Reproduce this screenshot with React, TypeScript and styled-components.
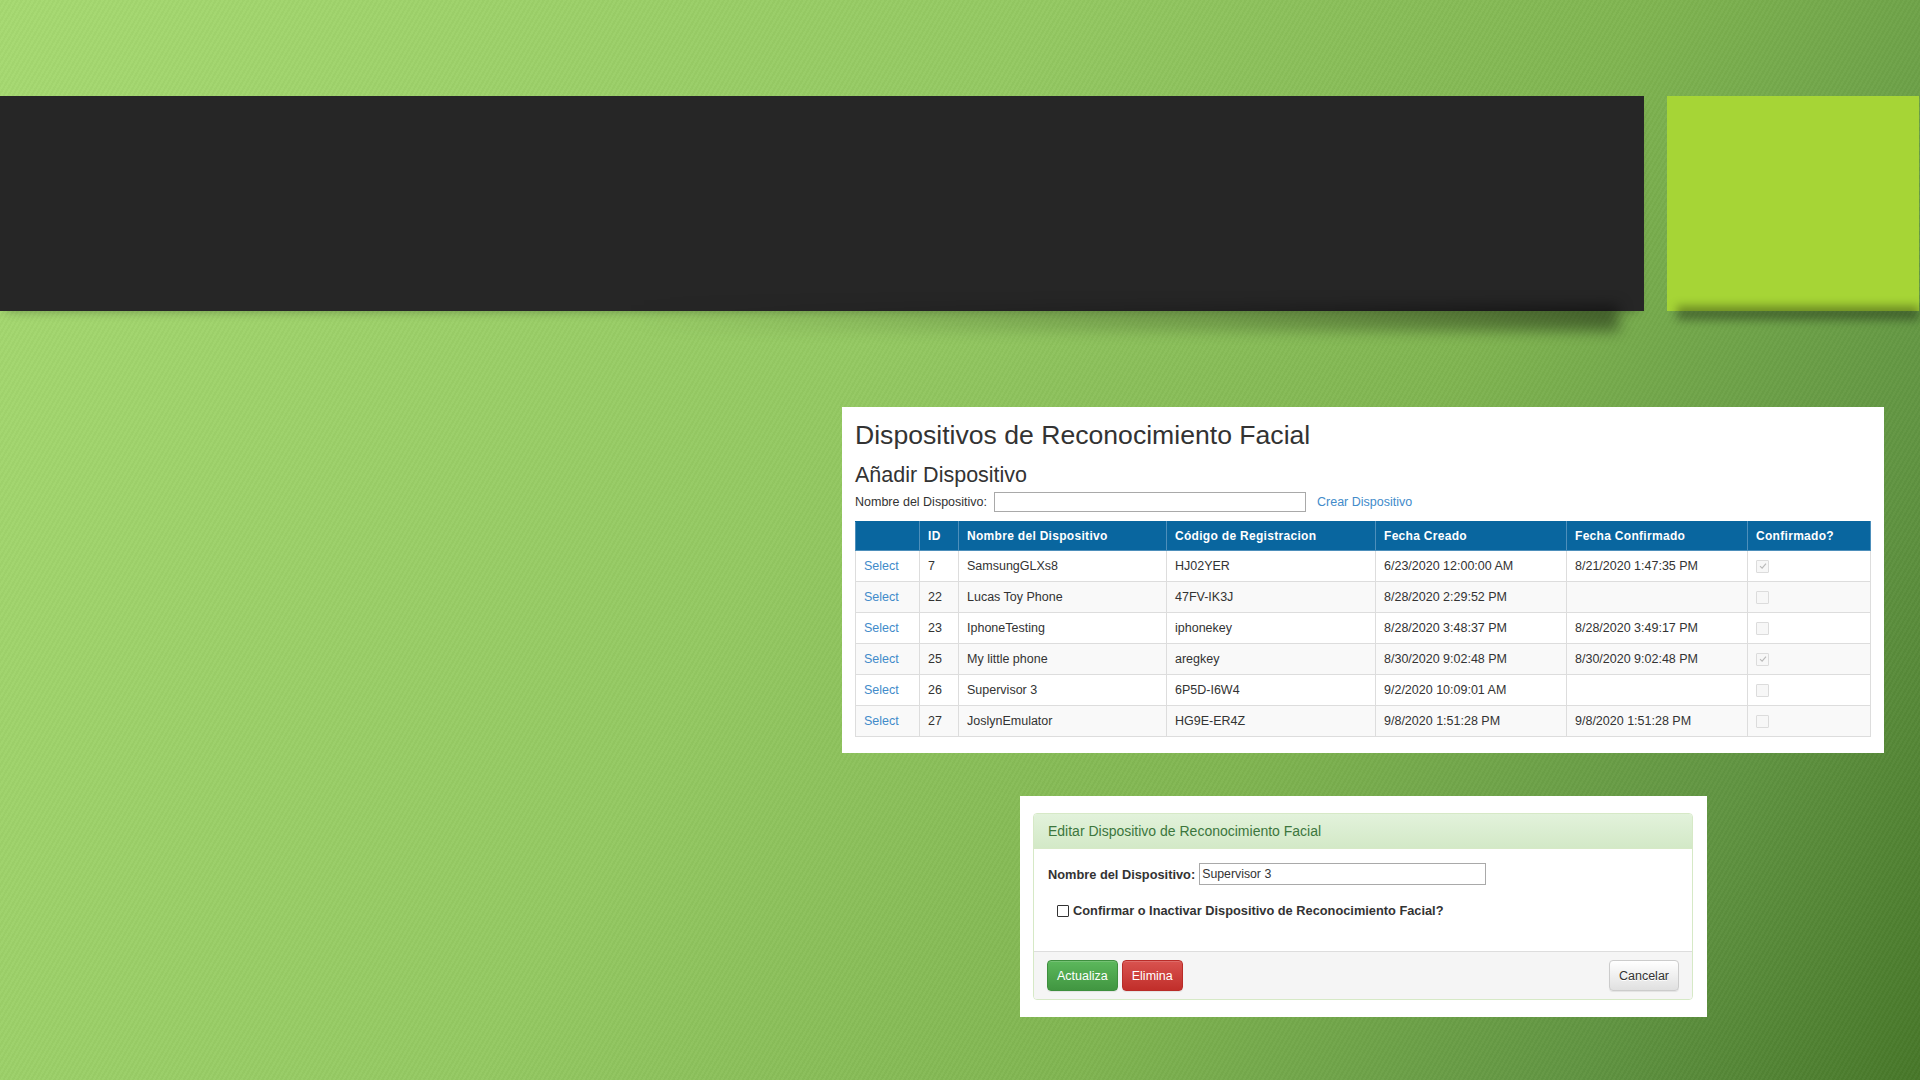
import styled, { createGlobalStyle } from "styled-components";

const GlobalStyle = createGlobalStyle`
  html, body {
    margin: 0;
    padding: 0;
  }
  body {
    width: 1920px;
    height: 1080px;
    overflow: hidden;
    font-family: "Liberation Sans", Arial, sans-serif;
  }
`;

type Device = {
  id: number;
  name: string;
  code: string;
  created: string;
  confirmedAt: string;
  confirmed: boolean;
};

const devices: Device[] = [
  { id: 7, name: "SamsungGLXs8", code: "HJ02YER", created: "6/23/2020 12:00:00 AM", confirmedAt: "8/21/2020 1:47:35 PM", confirmed: true },
  { id: 22, name: "Lucas Toy Phone", code: "47FV-IK3J", created: "8/28/2020 2:29:52 PM", confirmedAt: "", confirmed: false },
  { id: 23, name: "IphoneTesting", code: "iphonekey", created: "8/28/2020 3:48:37 PM", confirmedAt: "8/28/2020 3:49:17 PM", confirmed: false },
  { id: 25, name: "My little phone", code: "aregkey", created: "8/30/2020 9:02:48 PM", confirmedAt: "8/30/2020 9:02:48 PM", confirmed: true },
  { id: 26, name: "Supervisor 3", code: "6P5D-I6W4", created: "9/2/2020 10:09:01 AM", confirmedAt: "", confirmed: false },
  { id: 27, name: "JoslynEmulator", code: "HG9E-ER4Z", created: "9/8/2020 1:51:28 PM", confirmedAt: "9/8/2020 1:51:28 PM", confirmed: false },
];

const columns = [64, 39, 208, 209, 191, 181, 123];

export default function App() {
  return (
    <>
      <GlobalStyle />
      <Slide>
        <Banner>
          <TitleBar />
          <Accent />
        </Banner>

        <TableShot>
          <PageTitle>Dispositivos de Reconocimiento Facial</PageTitle>
          <SubTitle>Añadir Dispositivo</SubTitle>
          <AddRow>
            <span>Nombre del Dispositivo:</span>
            <AddInput />
            <Link>Crear Dispositivo</Link>
          </AddRow>
          <Grid>
            <colgroup>
              {columns.map((w, i) => (
                <col key={i} style={{ width: w }} />
              ))}
            </colgroup>
            <thead>
              <tr>
                <Th />
                <Th>ID</Th>
                <Th>Nombre del Dispositivo</Th>
                <Th>Código de Registracion</Th>
                <Th>Fecha Creado</Th>
                <Th>Fecha Confirmado</Th>
                <Th>Confirmado?</Th>
              </tr>
            </thead>
            <tbody>
              {devices.map((d, i) => (
                <Row key={d.id} striped={i % 2 === 1}>
                  <Td>
                    <Link>Select</Link>
                  </Td>
                  <Td>{d.id}</Td>
                  <Td>{d.name}</Td>
                  <Td>{d.code}</Td>
                  <Td>{d.created}</Td>
                  <Td>{d.confirmedAt}</Td>
                  <Td>
                    <MutedCheck>
                      {d.confirmed && (
                        <svg width="8" height="8" viewBox="0 0 8 8">
                          <path d="M1 4.2 L3.1 6.2 L7 1.6" fill="none" stroke="#b9b9b9" strokeWidth="1.1" />
                        </svg>
                      )}
                    </MutedCheck>
                  </Td>
                </Row>
              ))}
            </tbody>
          </Grid>
        </TableShot>

        <EditShot>
          <Panel>
            <PanelHeading>Editar Dispositivo de Reconocimiento Facial</PanelHeading>
            <PanelBody>
              <FieldRow>
                <BoldLabel>Nombre del Dispositivo:</BoldLabel>
                <EditInput defaultValue="Supervisor 3" />
              </FieldRow>
              <CheckRow>
                <PlainCheck />
                <BoldLabel>Confirmar o Inactivar Dispositivo de Reconocimiento Facial?</BoldLabel>
              </CheckRow>
            </PanelBody>
            <PanelFooter>
              <Button kind="success">Actualiza</Button>
              <Button kind="danger">Elimina</Button>
              <Spacer />
              <Button kind="default">Cancelar</Button>
            </PanelFooter>
          </Panel>
        </EditShot>
      </Slide>
    </>
  );
}

const Slide = styled.div`
  width: 1920px;
  height: 1080px;
  box-sizing: border-box;
  padding-top: 96px;
  overflow: hidden;
  background:
    repeating-linear-gradient(
      120deg,
      rgba(255, 255, 255, 0.025) 0px,
      rgba(255, 255, 255, 0.025) 2px,
      rgba(0, 0, 0, 0.02) 2px,
      rgba(0, 0, 0, 0.02) 4px
    ),
    linear-gradient(118deg, #a6d971 0%, #94c962 42%, #80b551 66%, #619542 86%, #477729 100%);
`;

const Banner = styled.div`
  display: flex;
  gap: 23px;
  height: 215px;
`;

const TitleBar = styled.div`
  position: relative;
  width: 1644px;
  background: #262626;
  box-shadow: 0 6px 10px -6px rgba(0, 0, 0, 0.3);

  &::after {
    content: "";
    position: absolute;
    left: 38%;
    right: 1.5%;
    top: 100%;
    height: 26px;
    background: linear-gradient(to right, rgba(0, 0, 0, 0), rgba(0, 0, 0, 0.18) 60%, rgba(0, 0, 0, 0.42));
    filter: blur(7px);
    transform: translateY(-6px);
  }
`;

const Accent = styled.div`
  position: relative;
  width: 252px;
  background: #a6d536;

  &::after {
    content: "";
    position: absolute;
    left: 10px;
    right: 0;
    top: 100%;
    height: 14px;
    background: rgba(0, 0, 0, 0.35);
    filter: blur(5px);
    transform: translateY(-5px);
  }
`;

const TableShot = styled.div`
  width: 1042px;
  height: 346px;
  margin: 96px 0 0 842px;
  box-sizing: border-box;
  padding: 13px 14px 16px 13px;
  background: #fff;
  color: #333;
`;

const PageTitle = styled.div`
  font-size: 26.6px;
  line-height: 30px;
  color: #333;
`;

const SubTitle = styled.div`
  margin-top: 13px;
  font-size: 21.5px;
  line-height: 24px;
  color: #333;
`;

const AddRow = styled.div`
  display: flex;
  align-items: center;
  gap: 7px;
  margin-top: 5px;
  height: 20px;
  font-size: 12.5px;
  color: #333;
`;

const AddInput = styled.div`
  width: 310px;
  height: 18px;
  border: 1px solid #a9a9a9;
  background: #fff;
  margin-right: 4px;
`;

const Link = styled.span`
  color: #428bca;
  font-size: 12.5px;
`;

const Grid = styled.table`
  margin-top: 9px;
  width: 1015px;
  table-layout: fixed;
  border-collapse: collapse;
  font-size: 12.5px;
`;

const Th = styled.th`
  height: 29px;
  padding: 0 8px;
  box-sizing: border-box;
  background: #09669f;
  color: #fff;
  font-weight: bold;
  font-size: 12px;
  letter-spacing: 0.3px;
  text-align: left;
  border: 1px solid #4d8fbb;
  border-top-color: #09669f;
`;

const Row = styled.tr<{ striped: boolean }>`
  background: ${(p) => (p.striped ? "#f9f9f9" : "#fff")};
`;

const Td = styled.td`
  height: 31px;
  padding: 0 8px;
  box-sizing: border-box;
  border: 1px solid #dddddd;
  color: #333;
  white-space: nowrap;
`;

const MutedCheck = styled.span`
  display: flex;
  align-items: center;
  justify-content: center;
  width: 11px;
  height: 11px;
  border: 1px solid #dcdcdc;
  border-radius: 1px;
  background: #f7f7f7;
`;

const EditShot = styled.div`
  width: 687px;
  height: 221px;
  margin: 43px 0 0 1020px;
  box-sizing: border-box;
  padding: 17px 14px 16px 13px;
  background: #fff;
`;

const Panel = styled.div`
  border: 1px solid #d6e9c6;
  border-radius: 4px;
  overflow: hidden;
  background: #fff;
`;

const PanelHeading = styled.div`
  height: 34px;
  display: flex;
  align-items: center;
  padding: 0 14px;
  background: linear-gradient(#e2f2db, #d3e9c7);
  border-bottom: 1px solid #d6e9c6;
  color: #3c763d;
  font-size: 14px;
`;

const PanelBody = styled.div`
  height: 102px;
  box-sizing: border-box;
  padding: 14px 14px 0 14px;
`;

const FieldRow = styled.div`
  display: flex;
  align-items: center;
  gap: 4px;
`;

const BoldLabel = styled.span`
  font-weight: bold;
  font-size: 12.8px;
  color: #333;
`;

const EditInput = styled.input`
  width: 287px;
  height: 22px;
  box-sizing: border-box;
  margin: 0;
  padding: 0 2px;
  border: 1px solid #a9a9a9;
  font-family: "Liberation Sans", Arial, sans-serif;
  font-size: 12.3px;
  color: #333;
`;

const CheckRow = styled.div`
  display: flex;
  align-items: center;
  gap: 4px;
  margin: 18px 0 0 9px;
`;

const PlainCheck = styled.span`
  width: 10px;
  height: 10px;
  border: 1px solid #333;
  border-radius: 1px;
  background: #fff;
`;

const PanelFooter = styled.div`
  display: flex;
  align-items: center;
  gap: 4px;
  height: 48px;
  box-sizing: border-box;
  padding: 0 13px;
  background: #f5f5f5;
  border-top: 1px solid #dddddd;
`;

const Spacer = styled.div`
  flex: 1;
`;

const buttonSkins = {
  success: {
    bg: "linear-gradient(#5cb85c, #419641)",
    border: "#3e8f3e",
    color: "#fff",
    shadow: "none",
  },
  danger: {
    bg: "linear-gradient(#d9534f, #c12e2a)",
    border: "#b92c28",
    color: "#fff",
    shadow: "none",
  },
  default: {
    bg: "linear-gradient(#ffffff, #e0e0e0)",
    border: "#cccccc",
    color: "#333",
    shadow: "0 1px 0 #fff",
  },
};

const Button = styled.button<{ kind: keyof typeof buttonSkins }>`
  height: 31px;
  padding: 0 9px;
  border-radius: 4px;
  border: 1px solid ${(p) => buttonSkins[p.kind].border};
  background: ${(p) => buttonSkins[p.kind].bg};
  color: ${(p) => buttonSkins[p.kind].color};
  text-shadow: ${(p) => buttonSkins[p.kind].shadow};
  box-shadow: inset 0 1px 0 rgba(255, 255, 255, 0.15), 0 1px 1px rgba(0, 0, 0, 0.075);
  font-family: "Liberation Sans", Arial, sans-serif;
  font-size: 12.5px;
`;
